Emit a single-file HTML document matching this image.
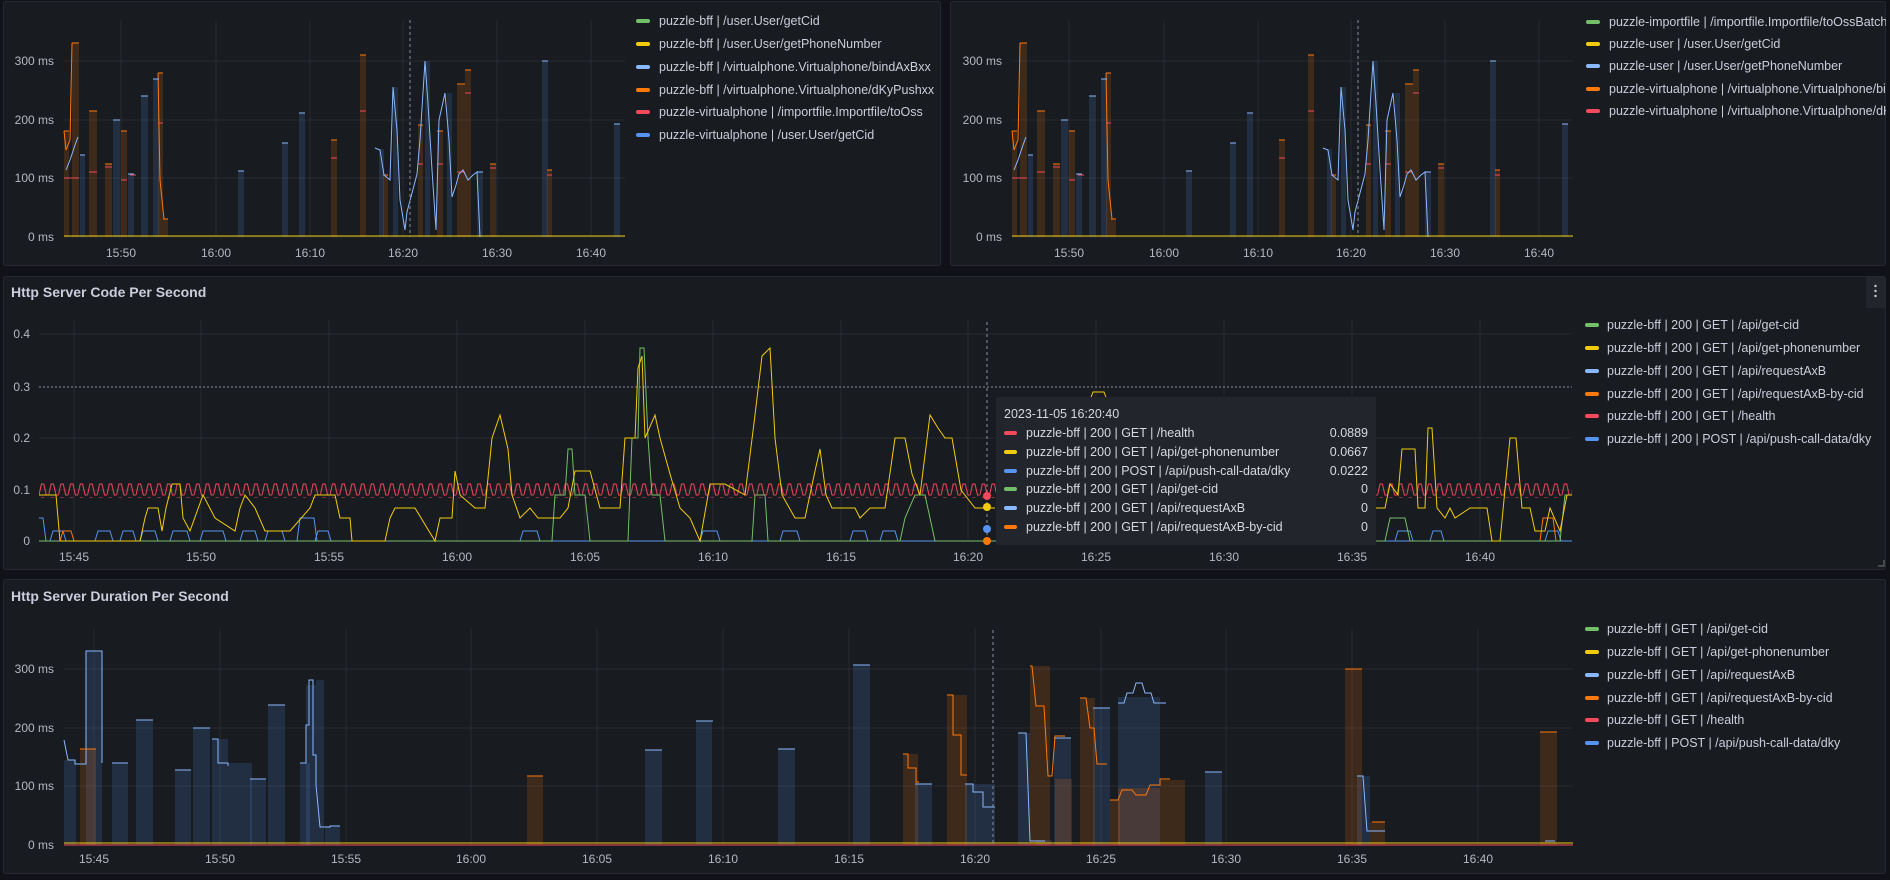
<!DOCTYPE html>
<html><head><meta charset="utf-8"><style>
html,body{margin:0;padding:0;background:#111217;width:1890px;height:880px;overflow:hidden}
svg{display:block;font-family:"Liberation Sans",sans-serif}
.ax{fill:#b7b7c2;font-size:12px}
.lg{fill:#ccccdc;font-size:12.5px}
.tt{fill:#d8d9e0;font-size:12.5px}
.g{stroke:rgba(204,204,220,0.09);stroke-width:1}
.bb{fill:rgba(87,148,242,0.16);stroke:none}
.bo{fill:rgba(255,120,10,0.17)}
.lb{stroke:#8ab8ff;fill:none;stroke-width:1}
.lo{stroke:#ff780a;fill:none;stroke-width:1}
.lr{stroke:#f2495c;fill:none;stroke-width:1}
.ly{stroke:#f2cc0c;fill:none;stroke-width:1}
.lgn{stroke:#73bf69;fill:none;stroke-width:1}
.lbl{stroke:#5794f2;fill:none;stroke-width:1}
</style></head><body>
<svg width="1890" height="880" viewBox="0 0 1890 880">
<defs>
<pattern id="zz" x="39" y="483" width="9.7" height="14" patternUnits="userSpaceOnUse">
<path d="M0,12 L2.4,1 L4.8,1 L7.3,12 L9.7,12" stroke="#f2495c" fill="none" stroke-width="1"/>
</pattern>
<clipPath id="c1"><rect x="0" y="0" width="940" height="266"/></clipPath>
<clipPath id="c2"><rect x="950" y="0" width="936" height="266"/></clipPath>
<clipPath id="c3"><rect x="0" y="276" width="1886" height="294"/></clipPath>
<g id="topchart">
<g class="g"><line x1="64" y1="61" x2="625" y2="61"/><line x1="64" y1="120" x2="625" y2="120"/><line x1="64" y1="178" x2="625" y2="178"/><line x1="64" y1="237" x2="625" y2="237"/>
<line x1="121" y1="20" x2="121" y2="237"/><line x1="216" y1="20" x2="216" y2="237"/><line x1="310" y1="20" x2="310" y2="237"/><line x1="403" y1="20" x2="403" y2="237"/><line x1="497" y1="20" x2="497" y2="237"/><line x1="591" y1="20" x2="591" y2="237"/></g>
<g class="bo"><rect x="64" y="131" width="5" height="106"/><rect x="72" y="43" width="7" height="194"/><rect x="89" y="111" width="8" height="126"/><rect x="105" y="164" width="7" height="73"/><rect x="121" y="131" width="6" height="106"/><rect x="158" y="73" width="5" height="164"/><rect x="163" y="219" width="5" height="18"/><rect x="331" y="140" width="6" height="97"/><rect x="360" y="55" width="6" height="182"/><rect x="383" y="175" width="5" height="62"/><rect x="418" y="125" width="5" height="112"/><rect x="437" y="131" width="6" height="106"/><rect x="457" y="84" width="8" height="153"/><rect x="465" y="70" width="6" height="167"/><rect x="490" y="164" width="6" height="73"/><rect x="547" y="170" width="5" height="67"/></g>
<g class="bb"><rect x="80" y="155" width="5" height="82"/><rect x="113" y="120" width="7" height="117"/><rect x="128" y="174" width="6" height="63"/><rect x="141" y="96" width="7" height="141"/><rect x="153" y="79" width="6" height="158"/><rect x="238" y="171" width="6" height="66"/><rect x="282" y="143" width="6" height="94"/><rect x="299" y="113" width="6" height="124"/><rect x="379" y="149" width="5" height="88"/><rect x="393" y="87" width="5" height="150"/><rect x="425" y="61" width="5" height="176"/><rect x="447" y="93" width="5" height="144"/><rect x="477" y="172" width="6" height="65"/><rect x="542" y="61" width="6" height="176"/><rect x="614" y="124" width="6" height="113"/></g>
<path class="lo" d="M64,131h5M72,43h7M89,111h8M105,164h7M121,131h6M158,73h5M163,219h5M331,140h6M360,55h6M383,175h5M418,125h5M437,131h6M457,84h8M465,70h6M490,164h6M547,170h5M64,131L66,150L70,140L72,43M158,73L160,180L164,219"/>
<path class="lr" d="M64,178h8M72,178h7M89,172h8M105,167h7M121,180h6M130,175h6M158,123h5M331,158h6M360,111h6M418,164h5M437,164h6M457,172h8M465,93h6M490,168h6M547,175h5"/>
<path class="lb" d="M80,155h5M113,120h7M128,174h6M141,96h7M153,79h6M238,171h6M282,143h6M299,113h6M542,61h6M614,124h6M477,172h6M375,148L380,150L384,175L390,180L393,87L397,130L400,200L405,230L407,212L417,174L420,140L425,61L428,104L432,170L436,230L439,120L445,93L449,140L452,197L456,185L459,174L463,170L468,180L473,175L477,172L480,237M66,170L70,160L75,145L78,137"/>
<path class="ly" d="M64,236H625"/>
<line x1="410" y1="20" x2="410" y2="237" stroke="#8e8e99" stroke-dasharray="3,3"/>
<g class="ax" text-anchor="end"><text x="54" y="65">300 ms</text><text x="54" y="124">200 ms</text><text x="54" y="182">100 ms</text><text x="54" y="241">0 ms</text></g>
<g class="ax" text-anchor="middle"><text x="121" y="257">15:50</text><text x="216" y="257">16:00</text><text x="310" y="257">16:10</text><text x="403" y="257">16:20</text><text x="497" y="257">16:30</text><text x="591" y="257">16:40</text></g>
</g>
</defs>

<rect x="3.5" y="1.5" width="937" height="264" rx="2" fill="#181b1f" stroke="#25282e"/>
<rect x="950.5" y="1.5" width="935" height="264" rx="2" fill="#181b1f" stroke="#25282e"/>
<rect x="3.5" y="276.5" width="1882" height="293" rx="2" fill="#181b1f" stroke="#25282e"/>
<rect x="3.5" y="579.5" width="1882" height="294" rx="2" fill="#181b1f" stroke="#25282e"/>

<use href="#topchart"/>
<g clip-path="url(#c1)">
<rect x="636" y="19" width="14" height="4" rx="2" fill="#73bf69"/><text class="lg" x="659" y="25">puzzle-bff | /user.User/getCid</text>
<rect x="636" y="42" width="14" height="4" rx="2" fill="#f2cc0c"/><text class="lg" x="659" y="48">puzzle-bff | /user.User/getPhoneNumber</text>
<rect x="636" y="65" width="14" height="4" rx="2" fill="#8ab8ff"/><text class="lg" x="659" y="71">puzzle-bff | /virtualphone.Virtualphone/bindAxBxx</text>
<rect x="636" y="88" width="14" height="4" rx="2" fill="#ff780a"/><text class="lg" x="659" y="94">puzzle-bff | /virtualphone.Virtualphone/dKyPushxx</text>
<rect x="636" y="110" width="14" height="4" rx="2" fill="#f2495c"/><text class="lg" x="659" y="116">puzzle-virtualphone | /importfile.Importfile/toOss</text>
<rect x="636" y="133" width="14" height="4" rx="2" fill="#5794f2"/><text class="lg" x="659" y="139">puzzle-virtualphone | /user.User/getCid</text>
</g>

<use href="#topchart" transform="translate(948,0)"/>
<g clip-path="url(#c2)">
<rect x="1586" y="20" width="14" height="4" rx="2" fill="#73bf69"/><text class="lg" x="1609" y="26">puzzle-importfile | /importfile.Importfile/toOssBatch</text>
<rect x="1586" y="42" width="14" height="4" rx="2" fill="#f2cc0c"/><text class="lg" x="1609" y="48">puzzle-user | /user.User/getCid</text>
<rect x="1586" y="64" width="14" height="4" rx="2" fill="#8ab8ff"/><text class="lg" x="1609" y="70">puzzle-user | /user.User/getPhoneNumber</text>
<rect x="1586" y="87" width="14" height="4" rx="2" fill="#ff780a"/><text class="lg" x="1609" y="93">puzzle-virtualphone | /virtualphone.Virtualphone/bind</text>
<rect x="1586" y="109" width="14" height="4" rx="2" fill="#f2495c"/><text class="lg" x="1609" y="115">puzzle-virtualphone | /virtualphone.Virtualphone/dKy</text>
</g>

<text x="11" y="297" fill="#ccccdc" font-size="14" font-weight="bold">Http Server Code Per Second</text>
<rect x="1866" y="277" width="19" height="31" fill="#22252b"/>
<g fill="#ccccdc"><circle cx="1875.5" cy="286" r="1.2"/><circle cx="1875.5" cy="291" r="1.2"/><circle cx="1875.5" cy="296" r="1.2"/></g>
<g class="g"><line x1="39" y1="334" x2="1572" y2="334"/><line x1="39" y1="438" x2="1572" y2="438"/><line x1="39" y1="490" x2="1572" y2="490"/><line x1="39" y1="541" x2="1572" y2="541"/>
<line x1="74" y1="320" x2="74" y2="541"/><line x1="201" y1="320" x2="201" y2="541"/><line x1="329" y1="320" x2="329" y2="541"/><line x1="457" y1="320" x2="457" y2="541"/><line x1="585" y1="320" x2="585" y2="541"/><line x1="713" y1="320" x2="713" y2="541"/><line x1="841" y1="320" x2="841" y2="541"/><line x1="968" y1="320" x2="968" y2="541"/><line x1="1096" y1="320" x2="1096" y2="541"/><line x1="1224" y1="320" x2="1224" y2="541"/><line x1="1352" y1="320" x2="1352" y2="541"/><line x1="1480" y1="320" x2="1480" y2="541"/></g>
<line x1="39" y1="387" x2="1572" y2="387" stroke="#8e8e99" stroke-dasharray="2,2"/>
<rect x="39" y="482" width="1533" height="16" fill="url(#zz)"/>
<path class="lbl" d="M39,541H1572M39,518h4l3,23M50,541l3,-10h10l3,10M95,541l3,-10h12l3,10M120,541l3,-10h10l3,10M140,541l3,-10h12l3,10M170,541l3,-10h14l3,10M200,541l3,-10h20l3,10M240,541l3,-10h12l3,10M265,541l3,-10h14l3,10M297,541l3,-23h14l3,23M315,541l3,-10h10l3,10M520,541l3,-10h14l3,10M700,541l3,-10h14l3,10M780,541l3,-10h14l3,10M850,541l3,-10h12l3,10M880,541l3,-10h12l3,10M1395,541l3,-10h12l3,10M1430,541l3,-10h8l3,10M1545,541l3,-10h10l3,10"/>
<path class="lo" d="M60,541l3,-10h8l3,10M1540,541l3,-23h10l3,23"/>
<polyline class="lgn" points="39,541 552,541 555,495 565,495 568,449 572,449 575,495 585,495 590,541 628,541 632,438 638,438 640,348 644,348 648,438 652,495 660,495 665,541 752,541 755,495 765,495 768,541 900,541 905,518 915,495 925,495 935,541 995,541"/>
<polyline class="lgn" points="1376,541 1385,541 1390,518 1405,518 1410,541 1560,541 1565,495 1572,495"/>
<polyline class="ly" points="39,495 56,495 60,541 140,541 145,518 148,508 158,508 162,531 166,508 172,484 180,484 183,518 190,531 203,495 215,518 235,531 240,508 245,495 255,508 265,531 290,531 310,508 315,495 335,495 340,518 350,518 352,541 385,541 390,518 395,508 415,508 435,541 440,518 452,518 455,471 460,495 475,508 485,508 492,438 500,415 508,449 512,495 520,518 530,508 538,518 560,518 568,508 575,471 590,471 600,508 620,508 625,438 635,438 638,368 642,356 645,438 655,415 660,438 670,474 680,508 690,518 700,541 710,484 725,484 745,495 755,415 762,356 770,348 775,438 782,495 795,518 805,518 815,471 820,449 826,495 832,508 855,508 860,518 870,508 885,508 895,438 905,438 912,474 920,495 930,415 938,428 945,438 952,438 961,490 975,508 995,508"/>
<polyline class="ly" points="1376,508 1385,508 1390,484 1398,495 1402,449 1415,449 1418,508 1425,508 1428,428 1432,428 1437,508 1445,518 1450,508 1455,518 1470,508 1487,508 1492,541 1500,541 1510,438 1516,438 1522,508 1530,508 1535,531 1545,531 1550,508 1560,531 1567,495 1572,495"/>
<polyline class="ly" points="1090,400 1093,392 1104,392 1107,400"/>
<line x1="987" y1="322" x2="987" y2="541" stroke="#8e8e99" stroke-dasharray="3,3"/>
<circle cx="987" cy="496" r="4" fill="#f2495c"/><circle cx="987" cy="507" r="4" fill="#f2cc0c"/><circle cx="987" cy="529" r="4" fill="#5794f2"/><circle cx="987" cy="541" r="4" fill="#ff780a"/>
<g class="ax" text-anchor="end"><text x="30" y="338">0.4</text><text x="30" y="391">0.3</text><text x="30" y="442">0.2</text><text x="30" y="494">0.1</text><text x="30" y="545">0</text></g>
<g class="ax" text-anchor="middle"><text x="74" y="561">15:45</text><text x="201" y="561">15:50</text><text x="329" y="561">15:55</text><text x="457" y="561">16:00</text><text x="585" y="561">16:05</text><text x="713" y="561">16:10</text><text x="841" y="561">16:15</text><text x="968" y="561">16:20</text><text x="1096" y="561">16:25</text><text x="1224" y="561">16:30</text><text x="1352" y="561">16:35</text><text x="1480" y="561">16:40</text></g>
<g clip-path="url(#c3)">
<rect x="1585" y="323" width="14" height="4" rx="2" fill="#73bf69"/><text class="lg" x="1607" y="329">puzzle-bff | 200 | GET | /api/get-cid</text>
<rect x="1585" y="346" width="14" height="4" rx="2" fill="#f2cc0c"/><text class="lg" x="1607" y="352">puzzle-bff | 200 | GET | /api/get-phonenumber</text>
<rect x="1585" y="369" width="14" height="4" rx="2" fill="#8ab8ff"/><text class="lg" x="1607" y="375">puzzle-bff | 200 | GET | /api/requestAxB</text>
<rect x="1585" y="392" width="14" height="4" rx="2" fill="#ff780a"/><text class="lg" x="1607" y="398">puzzle-bff | 200 | GET | /api/requestAxB-by-cid</text>
<rect x="1585" y="414" width="14" height="4" rx="2" fill="#f2495c"/><text class="lg" x="1607" y="420">puzzle-bff | 200 | GET | /health</text>
<rect x="1585" y="437" width="14" height="4" rx="2" fill="#5794f2"/><text class="lg" x="1607" y="443">puzzle-bff | 200 | POST | /api/push-call-data/dky</text>
</g>
<path d="M1878,566h6v-6" stroke="#777" fill="none"/>
<rect x="996" y="397" width="380" height="148" rx="2" fill="#22252b"/>
<text class="tt" x="1004" y="418">2023-11-05 16:20:40</text>
<g><rect x="1004" y="431" width="13" height="4" rx="2" fill="#f2495c"/><rect x="1004" y="450" width="13" height="4" rx="2" fill="#f2cc0c"/><rect x="1004" y="469" width="13" height="4" rx="2" fill="#5794f2"/><rect x="1004" y="487" width="13" height="4" rx="2" fill="#73bf69"/><rect x="1004" y="506" width="13" height="4" rx="2" fill="#8ab8ff"/><rect x="1004" y="525" width="13" height="4" rx="2" fill="#ff780a"/></g>
<g class="tt"><text x="1026" y="437">puzzle-bff | 200 | GET | /health</text><text x="1026" y="456">puzzle-bff | 200 | GET | /api/get-phonenumber</text><text x="1026" y="475">puzzle-bff | 200 | POST | /api/push-call-data/dky</text><text x="1026" y="493">puzzle-bff | 200 | GET | /api/get-cid</text><text x="1026" y="512">puzzle-bff | 200 | GET | /api/requestAxB</text><text x="1026" y="531">puzzle-bff | 200 | GET | /api/requestAxB-by-cid</text></g>
<g class="tt" text-anchor="end"><text x="1368" y="437">0.0889</text><text x="1368" y="456">0.0667</text><text x="1368" y="475">0.0222</text><text x="1368" y="493">0</text><text x="1368" y="512">0</text><text x="1368" y="531">0</text></g>

<text x="11" y="601" fill="#ccccdc" font-size="14" font-weight="bold">Http Server Duration Per Second</text>
<g class="g"><line x1="64" y1="669" x2="1573" y2="669"/><line x1="64" y1="728" x2="1573" y2="728"/><line x1="64" y1="786" x2="1573" y2="786"/>
<line x1="94" y1="628" x2="94" y2="845"/><line x1="220" y1="628" x2="220" y2="845"/><line x1="346" y1="628" x2="346" y2="845"/><line x1="471" y1="628" x2="471" y2="845"/><line x1="597" y1="628" x2="597" y2="845"/><line x1="723" y1="628" x2="723" y2="845"/><line x1="849" y1="628" x2="849" y2="845"/><line x1="975" y1="628" x2="975" y2="845"/><line x1="1101" y1="628" x2="1101" y2="845"/><line x1="1226" y1="628" x2="1226" y2="845"/><line x1="1352" y1="628" x2="1352" y2="845"/><line x1="1478" y1="628" x2="1478" y2="845"/></g>
<g class="bb"><rect x="64" y="760" width="12" height="85"/><rect x="86" y="651" width="16" height="194"/><rect x="112" y="763" width="16" height="82"/><rect x="136" y="720" width="17" height="125"/><rect x="175" y="770" width="16" height="75"/><rect x="193" y="728" width="17" height="117"/><rect x="212" y="739" width="16" height="106"/><rect x="228" y="763" width="24" height="82"/><rect x="250" y="779" width="16" height="66"/><rect x="268" y="705" width="17" height="140"/><rect x="300" y="763" width="10" height="82"/><rect x="306" y="685" width="10" height="160"/><rect x="316" y="680" width="8" height="165"/><rect x="325" y="826" width="15" height="19"/><rect x="645" y="750" width="17" height="95"/><rect x="696" y="721" width="16" height="124"/><rect x="778" y="749" width="17" height="96"/><rect x="853" y="665" width="17" height="180"/><rect x="915" y="784" width="17" height="61"/><rect x="965" y="784" width="30" height="61"/><rect x="1018" y="733" width="12" height="112"/><rect x="1036" y="840" width="16" height="5"/><rect x="1054" y="738" width="17" height="107"/><rect x="1093" y="708" width="17" height="137"/><rect x="1118" y="697" width="42" height="148"/><rect x="1205" y="772" width="17" height="73"/><rect x="1357" y="776" width="13" height="69"/></g>
<g class="bo"><rect x="80" y="749" width="16" height="96"/><rect x="527" y="776" width="16" height="69"/><rect x="903" y="754" width="15" height="91"/><rect x="947" y="695" width="20" height="150"/><rect x="1030" y="666" width="20" height="179"/><rect x="1055" y="779" width="17" height="66"/><rect x="1080" y="698" width="15" height="147"/><rect x="1110" y="800" width="10" height="45"/><rect x="1118" y="788" width="42" height="57"/><rect x="1160" y="780" width="25" height="65"/><rect x="1345" y="669" width="17" height="176"/><rect x="1370" y="822" width="15" height="23"/><rect x="1540" y="732" width="17" height="113"/></g>
<path class="lb" d="M64,740L68,760H75V764H86V651H102V763M112,763h16M136,720h17M175,770h16M193,728h17M212,739h6V763h10v3H228M250,779h16M268,705h17M300,763h6V725h3V680h4V755h3V785l4,42H330V826h10M645,750h17M696,721h17M778,749h17M853,665h17M915,784h17M965,784h8v8h10v15h12M1018,733h8l4,108h15M1054,738h17M1093,708h17M1118,703h6l3,-10h6l3,-10h6l3,10h6l3,10h12M1205,772h17M1357,776h6l4,55h18M1545,841h10"/>
<path class="lo" d="M80,749h16M527,776h16M903,754h5v14h8v14h3M947,695h6v40h8v40h6M1030,666h2l4,40h8l4,70h4l3,-40h10M1080,698h6l4,30h4l3,36h10M1110,800h8l4,-10h10l4,5h10l4,-10h10v-6h10M1345,669h17M1372,822h13M1540,732h17"/>
<path class="ly" d="M64,843H1573"/><path class="lr" d="M64,845H1573"/>
<line x1="993" y1="630" x2="993" y2="845" stroke="#8e8e99" stroke-dasharray="3,3"/>
<g class="ax" text-anchor="end"><text x="54" y="673">300 ms</text><text x="54" y="732">200 ms</text><text x="54" y="790">100 ms</text><text x="54" y="849">0 ms</text></g>
<g class="ax" text-anchor="middle"><text x="94" y="863">15:45</text><text x="220" y="863">15:50</text><text x="346" y="863">15:55</text><text x="471" y="863">16:00</text><text x="597" y="863">16:05</text><text x="723" y="863">16:10</text><text x="849" y="863">16:15</text><text x="975" y="863">16:20</text><text x="1101" y="863">16:25</text><text x="1226" y="863">16:30</text><text x="1352" y="863">16:35</text><text x="1478" y="863">16:40</text></g>
<rect x="1585" y="627" width="14" height="4" rx="2" fill="#73bf69"/><text class="lg" x="1607" y="633">puzzle-bff | GET | /api/get-cid</text>
<rect x="1585" y="650" width="14" height="4" rx="2" fill="#f2cc0c"/><text class="lg" x="1607" y="656">puzzle-bff | GET | /api/get-phonenumber</text>
<rect x="1585" y="673" width="14" height="4" rx="2" fill="#8ab8ff"/><text class="lg" x="1607" y="679">puzzle-bff | GET | /api/requestAxB</text>
<rect x="1585" y="696" width="14" height="4" rx="2" fill="#ff780a"/><text class="lg" x="1607" y="702">puzzle-bff | GET | /api/requestAxB-by-cid</text>
<rect x="1585" y="718" width="14" height="4" rx="2" fill="#f2495c"/><text class="lg" x="1607" y="724">puzzle-bff | GET | /health</text>
<rect x="1585" y="741" width="14" height="4" rx="2" fill="#5794f2"/><text class="lg" x="1607" y="747">puzzle-bff | POST | /api/push-call-data/dky</text>
</svg>
</body></html>
